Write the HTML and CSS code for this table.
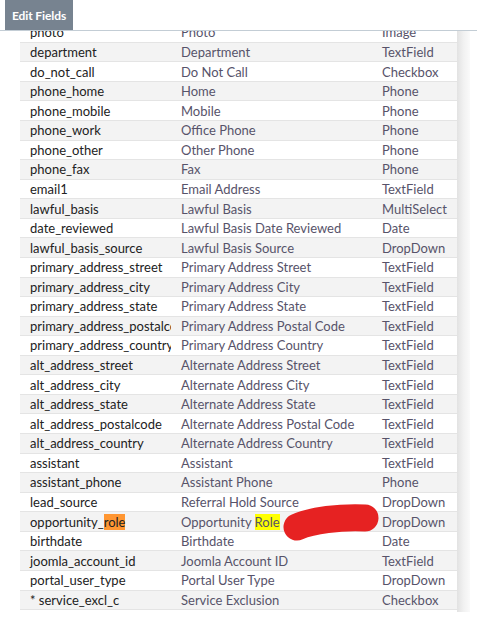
FILE: index.html
```html
<!DOCTYPE html>
<html>
<head>
<meta charset="utf-8">
<link rel="stylesheet" href="styles.css">
</head>
<body>
<div class="tabbar">
  <div class="tab">Edit Fields</div>
</div>
<div class="panel">
  <div class="viewport">
    <div class="rows">
      <div class="row"><span class="c1">photo</span><span class="c2">Photo</span><span class="c3">Image</span></div>
      <div class="row"><span class="c1">department</span><span class="c2">Department</span><span class="c3">TextField</span></div>
      <div class="row"><span class="c1">do_not_call</span><span class="c2">Do Not Call</span><span class="c3">Checkbox</span></div>
      <div class="row"><span class="c1">phone_home</span><span class="c2">Home</span><span class="c3">Phone</span></div>
      <div class="row"><span class="c1">phone_mobile</span><span class="c2">Mobile</span><span class="c3">Phone</span></div>
      <div class="row"><span class="c1">phone_work</span><span class="c2">Office Phone</span><span class="c3">Phone</span></div>
      <div class="row"><span class="c1">phone_other</span><span class="c2">Other Phone</span><span class="c3">Phone</span></div>
      <div class="row"><span class="c1">phone_fax</span><span class="c2">Fax</span><span class="c3">Phone</span></div>
      <div class="row"><span class="c1">email1</span><span class="c2">Email Address</span><span class="c3">TextField</span></div>
      <div class="row"><span class="c1">lawful_basis</span><span class="c2">Lawful Basis</span><span class="c3">MultiSelect</span></div>
      <div class="row"><span class="c1">date_reviewed</span><span class="c2">Lawful Basis Date Reviewed</span><span class="c3">Date</span></div>
      <div class="row"><span class="c1">lawful_basis_source</span><span class="c2">Lawful Basis Source</span><span class="c3">DropDown</span></div>
      <div class="row"><span class="c1">primary_address_street</span><span class="c2">Primary Address Street</span><span class="c3">TextField</span></div>
      <div class="row"><span class="c1">primary_address_city</span><span class="c2">Primary Address City</span><span class="c3">TextField</span></div>
      <div class="row"><span class="c1">primary_address_state</span><span class="c2">Primary Address State</span><span class="c3">TextField</span></div>
      <div class="row"><span class="c1">primary_address_postalcode</span><span class="c2">Primary Address Postal Code</span><span class="c3">TextField</span></div>
      <div class="row"><span class="c1">primary_address_country</span><span class="c2">Primary Address Country</span><span class="c3">TextField</span></div>
      <div class="row"><span class="c1">alt_address_street</span><span class="c2">Alternate Address Street</span><span class="c3">TextField</span></div>
      <div class="row"><span class="c1">alt_address_city</span><span class="c2">Alternate Address City</span><span class="c3">TextField</span></div>
      <div class="row"><span class="c1">alt_address_state</span><span class="c2">Alternate Address State</span><span class="c3">TextField</span></div>
      <div class="row"><span class="c1">alt_address_postalcode</span><span class="c2">Alternate Address Postal Code</span><span class="c3">TextField</span></div>
      <div class="row"><span class="c1">alt_address_country</span><span class="c2">Alternate Address Country</span><span class="c3">TextField</span></div>
      <div class="row"><span class="c1">assistant</span><span class="c2">Assistant</span><span class="c3">TextField</span></div>
      <div class="row"><span class="c1">assistant_phone</span><span class="c2">Assistant Phone</span><span class="c3">Phone</span></div>
      <div class="row"><span class="c1">lead_source</span><span class="c2">Referral Hold Source</span><span class="c3">DropDown</span></div>
      <div class="row"><span class="c1">opportunity_<mark class="hl-active">role</mark></span><span class="c2">Opportunity <mark class="hl">Role</mark></span><span class="c3">DropDown</span></div>
      <div class="row"><span class="c1">birthdate</span><span class="c2">Birthdate</span><span class="c3">Date</span></div>
      <div class="row"><span class="c1">joomla_account_id</span><span class="c2">Joomla Account ID</span><span class="c3">TextField</span></div>
      <div class="row"><span class="c1">portal_user_type</span><span class="c2">Portal User Type</span><span class="c3">DropDown</span></div>
      <div class="row"><span class="c1">* service_excl_c</span><span class="c2">Service Exclusion</span><span class="c3">Checkbox</span></div>
    </div>
  </div>
  <div class="strip"></div>
</div>
<svg class="scribble" width="477" height="621" viewBox="0 0 477 621">
  <path d="M297 527 C 312 520, 340 517, 365 518" fill="none" stroke="#e62222" stroke-width="27" stroke-linecap="round"/>
</svg>
</body>
</html>
```
FILE: styles.css
```css
html, body {
  margin: 0;
  padding: 0;
  background: #ffffff;
}
body {
  font-family: Lato, "Open Sans", sans-serif;
  font-size: 13px;
  position: relative;
}
.tabbar {
  height: 30px;
  padding-left: 5px;
  border-bottom: 1px solid #c3cdd5;
  display: flex;
}
.tab {
  width: 68px;
  height: 30px;
  background: #778390;
  color: #ffffff;
  font-weight: bold;
  font-size: 12px;
  display: flex;
  align-items: center;
  justify-content: center;
  letter-spacing: -0.1px;
}
.panel {
  display: flex;
  margin-left: 20px;
}
.viewport {
  width: 437px;
  height: 580px;
  overflow: hidden;
}
.rows {
  margin-top: -7.8px;
}
.row {
  display: grid;
  grid-template-columns: 151px 201px 85px;
  height: 19.57px;
  box-sizing: border-box;
  border-bottom: 1px solid #e4e4e4;
  align-items: center;
  line-height: 18px;
}
.row:nth-child(even) {
  background: #f3f3f3;
}
.c1, .c2, .c3 {
  padding-left: 10px;
  white-space: nowrap;
  overflow: hidden;
}
.c1 {
  color: #222222;
}
.c2, .c3 {
  color: #57536a;
}
.strip {
  width: 13px;
  height: 581px;
  background: linear-gradient(to right, #e2e2e2, #f1f1f1 50%, #fafafa);
}
mark {
  padding: 0;
  color: inherit;
}
.hl-active {
  background: #ff9632;
}
.hl {
  background: #ffff00;
}
.scribble {
  position: absolute;
  left: 0;
  top: 0;
  pointer-events: none;
}
```
